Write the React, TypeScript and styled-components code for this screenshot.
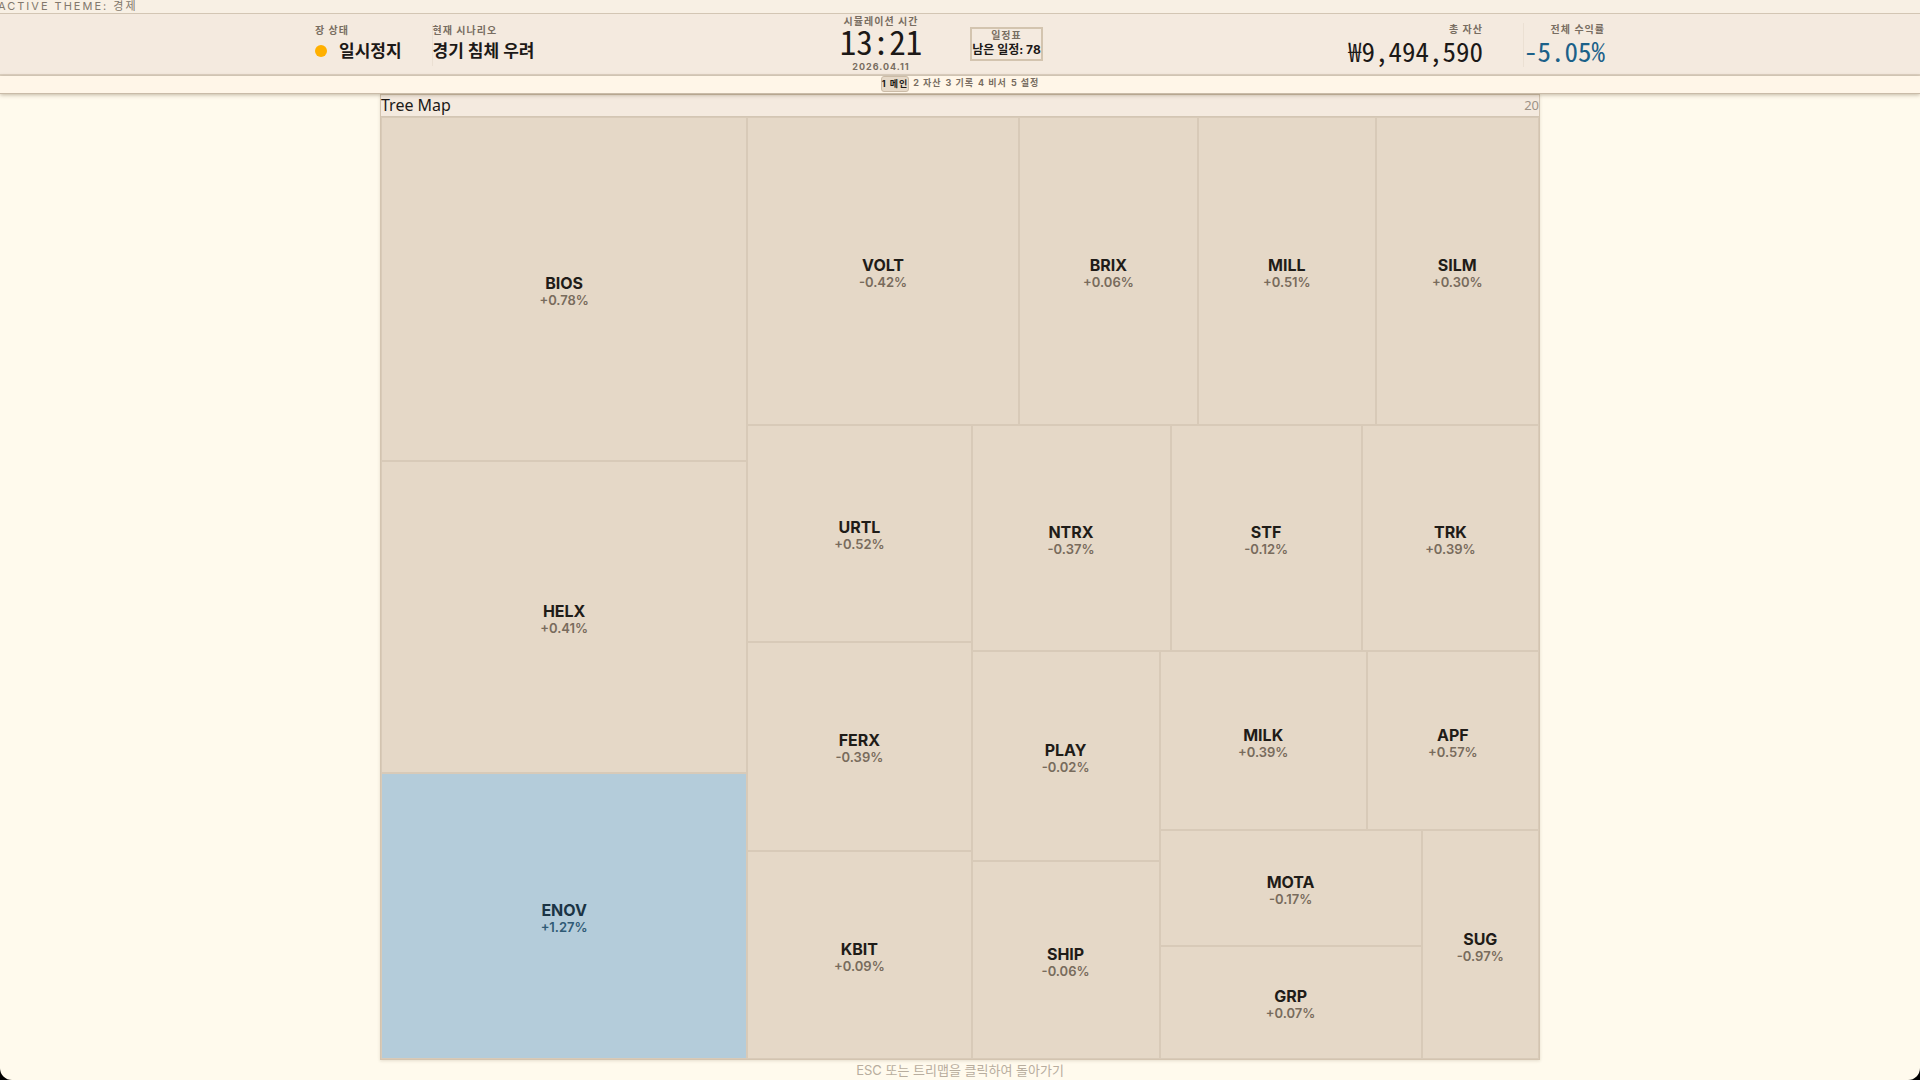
import React from "react";
import styled, { createGlobalStyle } from "styled-components";

const sans = `Inter, "Noto Sans CJK KR", sans-serif`;
const noto = `"Noto Sans", "Noto Sans CJK KR", sans-serif`;
const mono = `"Noto Sans Mono CJK KR", "DejaVu Sans Mono", monospace`;

const GlobalStyle = createGlobalStyle`
  *, *::before, *::after { box-sizing: border-box; }
  html { background: #000; }
  body { margin: 0; font-family: ${sans}; color: #1c1917; }
  button { margin: 0; padding: 0; border: 0; background: none; color: inherit; font: inherit; cursor: pointer; }
`;

const Screen = styled.div`
  display: flex;
  flex-direction: column;
  height: 100vh;
  overflow: hidden;
  background: #fffaed;
  border-radius: 0 0 12px 12px;
`;

const ThemeStrip = styled.div`
  height: 14px;
  flex: none;
  background: #f8f0e4;
  border-bottom: 1px solid #d3c6b4;
  font-size: 11px;
  line-height: 12px;
  letter-spacing: 2px;
  text-indent: -2px;
  color: #82786c;
  white-space: nowrap;
`;

const Header = styled.header`
  display: flex;
  justify-content: space-between;
  flex: none;
  height: 62px;
  padding: 0 315px;
  background: #f4eadf;
  border-bottom: 2px solid #ddd1c1;
`;

const Group = styled.div<{ $end?: boolean }>`
  display: flex;
  align-items: center;
  gap: ${(p) => (p.$end ? 40 : 30)}px;
  padding-top: 2px;
`;

const Stat = styled.div<{ $end?: boolean; $divided?: boolean }>`
  display: flex;
  flex-direction: column;
  align-items: ${(p) => (p.$end ? "flex-end" : "flex-start")};
  border-left: ${(p) => (p.$divided ? "1px solid #ebe0d3" : "0")};
`;

const Label = styled.span<{ $small?: boolean }>`
  font-size: ${(p) => (p.$small ? 9 : 10)}px;
  line-height: 12px;
  font-weight: 700;
  letter-spacing: 1px;
  color: #786d61;
  white-space: nowrap;
`;

const Value = styled.strong`
  display: flex;
  align-items: center;
  gap: 12px;
  font-size: 17px;
  line-height: 30px;
  font-weight: 700;
  white-space: nowrap;
`;

const Dot = styled.i`
  width: 12px;
  height: 12px;
  border-radius: 50%;
  background: #ffb000;
`;

const Money = styled.span<{ $color?: string }>`
  font-family: ${mono};
  font-size: 27px;
  line-height: 32px;
  font-variant-numeric: slashed-zero;
  color: ${(p) => p.$color ?? "#1c1917"};
`;

const Center = styled.div`
  display: flex;
  align-items: center;
  gap: 48px;
`;

const Clock = styled.div`
  display: flex;
  flex-direction: column;
  align-items: center;
`;

const Time = styled.time`
  margin-bottom: 6px;
  font-family: ${mono};
  font-size: 33px;
  line-height: 28px;
`;

const Schedule = styled.button`
  && {
    display: flex;
    flex-direction: column;
    align-items: center;
    justify-content: center;
    height: 34px;
    border: 2px solid #d3c4af;
    white-space: nowrap;
  }
`;

const ScheduleCount = styled.span`
  font-size: 12px;
  line-height: 18px;
  font-weight: 700;
`;

const Tabs = styled.nav`
  display: flex;
  justify-content: center;
  gap: 4px;
  flex: none;
  height: 18px;
  background: #fff6e8;
  border-bottom: 1px solid #c9bba8;
  box-shadow: 0 1px 4px rgba(80, 60, 30, 0.35);
  position: relative;
`;

const Tab = styled.button<{ $active?: boolean }>`
  && {
    height: ${(p) => (p.$active ? 16 : 14)}px;
    border: ${(p) => (p.$active ? "1px solid #cbbba6" : "0")};
    border-radius: 3px;
    background: ${(p) => (p.$active ? "#e6d9c8" : "transparent")};
    color: ${(p) => (p.$active ? "#1c1917" : "#786d61")};
    font-size: 9px;
    line-height: 14px;
    font-weight: 700;
    letter-spacing: 1px;
    white-space: nowrap;
  }
`;

const Main = styled.main`
  flex: 1;
  min-height: 0;
  display: flex;
  flex-direction: column;
  align-items: center;
`;

const Panel = styled.section`
  flex: 1;
  min-height: 0;
  display: flex;
  flex-direction: column;
  aspect-ratio: 1160 / 966;
  border: 1px solid #d3c4b0;
  background: #f4eadf;
  box-shadow: 0 1px 3px rgba(80, 60, 30, 0.15);
`;

const PanelHeader = styled.div`
  display: flex;
  justify-content: space-between;
  align-items: center;
  height: 22px;
  border-bottom: 1px solid #d3c6b4;
`;

const PanelTitle = styled.h1`
  margin: 0;
  font-family: ${noto};
  font-size: 16px;
  line-height: 21px;
  font-weight: 400;
`;

const PanelCount = styled.span`
  font-family: ${noto};
  font-size: 13px;
  line-height: 21px;
  color: #9c9286;
`;

const Split = styled.div<{ $dir: "row" | "column"; $size: number }>`
  display: flex;
  flex-direction: ${(p) => p.$dir};
  flex: ${(p) => p.$size} 1 0;
  min-width: 0;
  min-height: 0;
`;

const Tile = styled.button<{ $size: number; $hot?: boolean }>`
  && {
    display: flex;
    flex-direction: column;
    align-items: center;
    justify-content: center;
    flex: ${(p) => p.$size} 1 0;
    min-width: 0;
    min-height: 0;
    border: 1px solid #d8cab8;
    background: ${(p) => (p.$hot ? "#b4ccda" : "#e5d8c7")};
    color: ${(p) => (p.$hot ? "#1b3445" : "#1f1c18")};
  }
`;

const TileText = styled.span`
  display: flex;
  flex-direction: column;
  align-items: center;
  padding-top: 6px;
`;

const Ticker = styled.span`
  font-size: 16px;
  line-height: 16px;
  font-weight: 700;
`;

const Change = styled.span<{ $hot?: boolean }>`
  font-size: 13px;
  line-height: 18px;
  font-weight: 600;
  color: ${(p) => (p.$hot ? "#2f5a75" : "#786b5c")};
`;

const Hint = styled.p`
  margin: 0;
  flex: none;
  font-size: 13px;
  line-height: 20px;
  color: #b8ad9e;
`;

type Leaf = { size: number; name: string; change: string; hot?: boolean };
type Branch = { size: number; dir: "row" | "column"; items: MapNode[] };
type MapNode = Leaf | Branch;

const leaf = (size: number, name: string, change: string, hot = false): Leaf => ({ size, name, change, hot });
const row = (size: number, ...items: MapNode[]): Branch => ({ size, dir: "row", items });
const col = (size: number, ...items: MapNode[]): Branch => ({ size, dir: "column", items });

const market = row(
  1,
  col(366, leaf(344, "BIOS", "+0.78%"), leaf(312, "HELX", "+0.41%"), leaf(286, "ENOV", "+1.27%", true)),
  col(
    791,
    row(308, leaf(272, "VOLT", "-0.42%"), leaf(179, "BRIX", "+0.06%"), leaf(177, "MILL", "+0.51%"), leaf(163, "SILM", "+0.30%")),
    row(
      634,
      col(224, leaf(217, "URTL", "+0.52%"), leaf(209, "FERX", "-0.39%"), leaf(208, "KBIT", "+0.09%")),
      col(
        567,
        row(226, leaf(199, "NTRX", "-0.37%"), leaf(191, "STF", "-0.12%"), leaf(177, "TRK", "+0.39%")),
        row(
          408,
          col(188, leaf(210, "PLAY", "-0.02%"), leaf(198, "SHIP", "-0.06%")),
          col(
            379,
            row(179, leaf(207, "MILK", "+0.39%"), leaf(172, "APF", "+0.57%")),
            row(229, col(263, leaf(116, "MOTA", "-0.17%"), leaf(113, "GRP", "+0.07%")), leaf(116, "SUG", "-0.97%"))
          )
        )
      )
    )
  )
);

function TreeNode({ node }: { node: MapNode }) {
  if ("items" in node) {
    return (
      <Split $dir={node.dir} $size={node.size}>
        {node.items.map((item, i) => (
          <TreeNode key={i} node={item} />
        ))}
      </Split>
    );
  }
  return (
    <Tile $size={node.size} $hot={node.hot}>
      <TileText>
        <Ticker>{node.name}</Ticker>
        <Change $hot={node.hot}>{node.change}</Change>
      </TileText>
    </Tile>
  );
}

const tabs = ["1 메인", "2 자산", "3 기록", "4 비서", "5 설정"];

export default function App() {
  return (
    <Screen>
      <GlobalStyle />
      <ThemeStrip>ACTIVE THEME: 경제</ThemeStrip>
      <Header>
        <Group>
          <Stat>
            <Label>장 상태</Label>
            <Value>
              <Dot />
              일시정지
            </Value>
          </Stat>
          <Stat $divided>
            <Label>현재 시나리오</Label>
            <Value>경기 침체 우려</Value>
          </Stat>
        </Group>
        <Center>
          <Clock>
            <Label>시뮬레이션 시간</Label>
            <Time>13:21</Time>
            <Label $small>2026.04.11</Label>
          </Clock>
          <Schedule>
            <Label>일정표</Label>
            <ScheduleCount>남은 일정: 78</ScheduleCount>
          </Schedule>
        </Center>
        <Group $end>
          <Stat $end>
            <Label>총 자산</Label>
            <Money>₩9,494,590</Money>
          </Stat>
          <Stat $end $divided>
            <Label>전체 수익률</Label>
            <Money $color="#1c6189">-5.05%</Money>
          </Stat>
        </Group>
      </Header>
      <Tabs>
        {tabs.map((tab, i) => (
          <Tab key={tab} $active={i === 0}>
            {tab}
          </Tab>
        ))}
      </Tabs>
      <Main>
        <Panel>
          <PanelHeader>
            <PanelTitle>Tree Map</PanelTitle>
            <PanelCount>20</PanelCount>
          </PanelHeader>
          <TreeNode node={market} />
        </Panel>
        <Hint>ESC 또는 트리맵을 클릭하여 돌아가기</Hint>
      </Main>
    </Screen>
  );
}
